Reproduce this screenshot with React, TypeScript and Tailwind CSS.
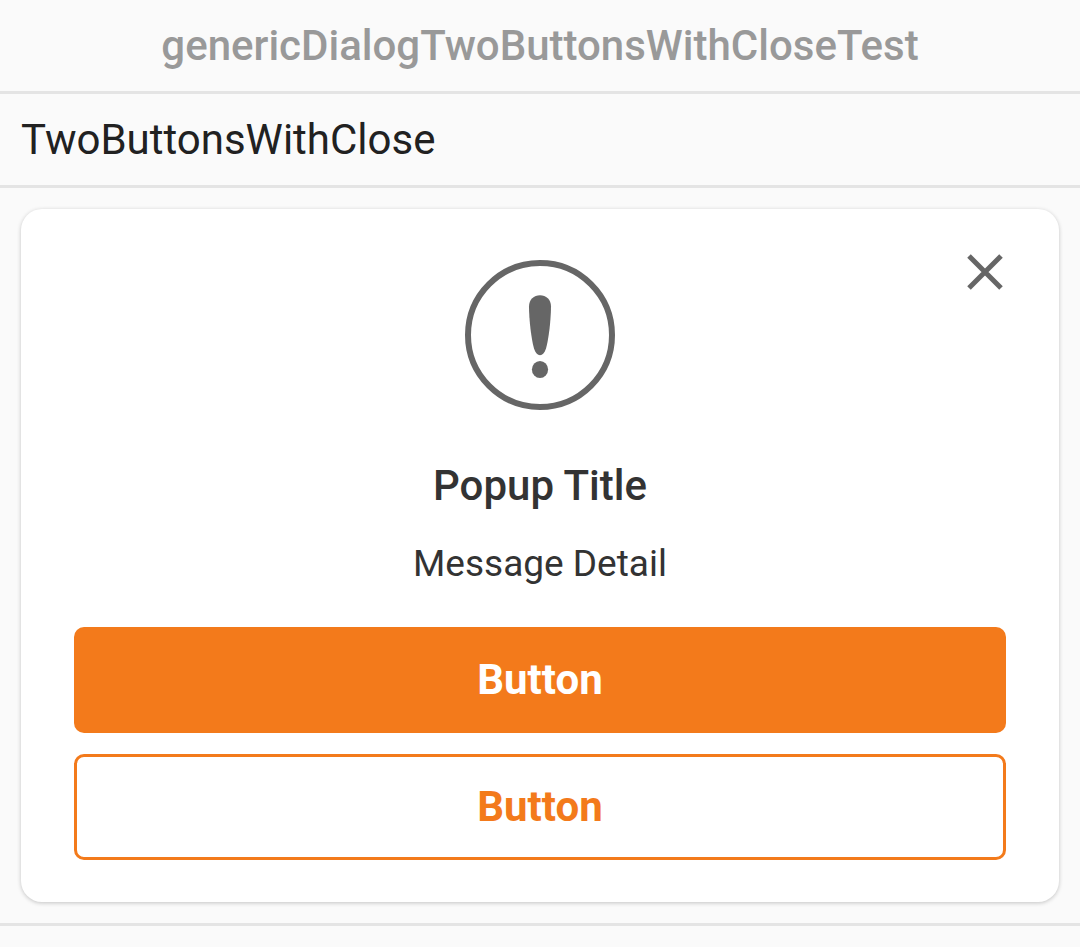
export default function App() {
  return (
    <main className="min-h-screen bg-[#fafafa] font-['Roboto',sans-serif] text-[42px] leading-[50px]">
      <header className="border-b-3 border-[#e4e4e4] px-5 pt-[21px] pb-5 text-center">
        <h1 className="font-medium text-[#999999]">genericDialogTwoButtonsWithCloseTest</h1>
      </header>
      <section className="border-b-3 border-[#e4e4e4]">
        <h2 className="border-b-3 border-[#e4e4e4] px-[21px] pt-[21px] pb-5 text-[#212121]">TwoButtonsWithClose</h2>
        <div className="p-[21px]">
          <div role="dialog" aria-labelledby="title" aria-describedby="detail" className="relative flex flex-col items-center rounded-[21px] bg-white px-[53px] pt-[51px] pb-[42px] shadow-[0_1px_4px_rgba(0,0,0,0.22)]">
            <button type="button" aria-label="Close" className="absolute top-[31px] right-[42px] flex size-16 items-center justify-center">
              <svg viewBox="0 0 64 64" className="size-16" fill="none" stroke="#666666" strokeWidth="5">
                <path d="M16 16 48 48M48 16 16 48" />
              </svg>
            </button>
            <svg viewBox="0 0 150 150" className="size-[150px]" fill="#666666" aria-hidden="true">
              <circle cx="75" cy="75" r="72" fill="none" stroke="#666666" strokeWidth="6" />
              <path d="M64 46.500C64 39.500 69 35.300 75 35.300S86 39.500 86 46.500C86 60 83.500 80 81 88.500C79.500 93 77.500 95.300 75 95.300S70.500 93 69 88.500C66.500 80 64 60 64 46.500Z" />
              <ellipse cx="75" cy="109.500" rx="8.100" ry="8.600" />
            </svg>
            <h3 id="title" className="mt-[51px] font-medium text-[#333333]">Popup Title</h3>
            <p id="detail" className="mt-[31px] text-[37px] leading-[44px] text-[#333333]">Message Detail</p>
            <div className="mt-[41px] flex w-full flex-col gap-[21px] font-bold">
              <button type="button" className="h-[106px] rounded-[10px] bg-[#f37a1b] text-white">Button</button>
              <button type="button" className="h-[106px] rounded-[10px] border-3 border-[#f37a1b] text-[#f37a1b]">Button</button>
            </div>
          </div>
        </div>
      </section>
    </main>
  );
}
